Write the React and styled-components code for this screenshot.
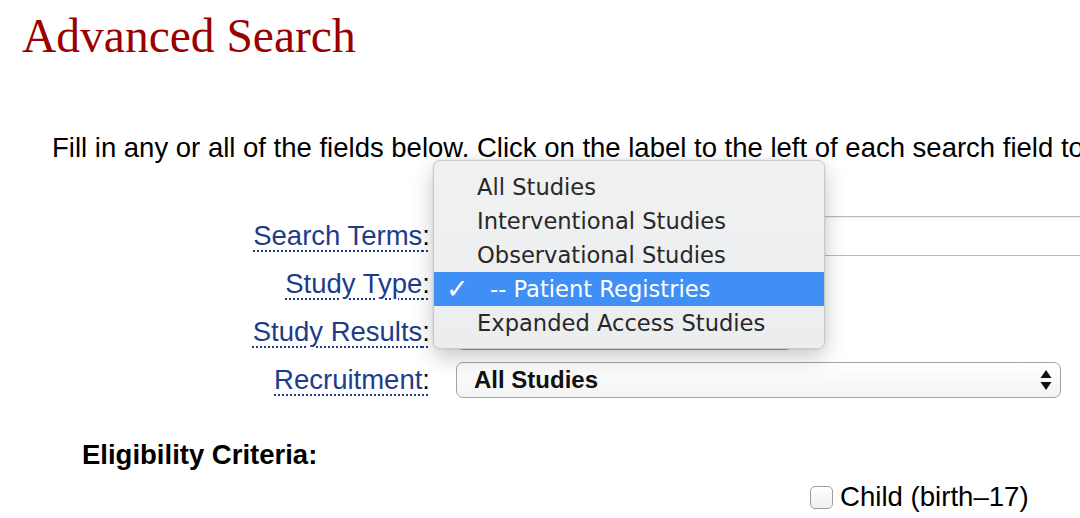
import React from 'react';
import styled, { createGlobalStyle } from 'styled-components';

const GlobalStyle = createGlobalStyle`
  html, body {
    margin: 0;
    padding: 0;
    background: #ffffff;
    overflow: hidden;
  }
  body {
    font-family: "Liberation Sans", Arial, sans-serif;
    color: #000;
  }
`;

const Page = styled.div`
  position: relative;
  width: 1080px;
  height: 518px;
  overflow: hidden;
`;

const Title = styled.h1`
  margin: 0;
  padding: 8px 0 0 22px;
  font-family: "Liberation Serif", Georgia, serif;
  font-weight: normal;
  font-size: 47.5px;
  line-height: 56px;
  color: #990000;
`;

const Intro = styled.p`
  margin: 68px 0 0 52px;
  font-size: 27.5px;
  line-height: 32px;
  white-space: nowrap;
`;

const Form = styled.div`
  position: relative;
  display: grid;
  grid-template-columns: 430px 1fr;
  grid-auto-rows: 40px;
  column-gap: 26px;
  row-gap: 8px;
  margin-top: 52px;
  align-items: center;
`;

const Label = styled.label`
  justify-self: end;
  font-size: 27.5px;
  line-height: 32px;
  color: #1d3c8c;
  text-decoration: underline dotted #1d3c8c;
  text-decoration-thickness: 2px;
  text-underline-offset: 5px;
  cursor: help;
  span {
    text-decoration: none;
    color: #000;
  }
`;

const TextInput = styled.div`
  height: 38px;
  width: 700px;
  border: 1px solid #b9b9b9;
  border-right: none;
  box-shadow: inset 0 1px 2px rgba(0, 0, 0, 0.08);
`;

const Select = styled.div`
  box-sizing: border-box;
  height: 36px;
  width: ${(p) => p.$width}px;
  border: 1.5px solid #a3a3a3;
  border-radius: 7px;
  background: linear-gradient(#ffffff, #f3f3f3);
  display: flex;
  align-items: center;
  justify-content: space-between;
  padding: 0 8px 0 17px;
  font-family: "Liberation Sans", Arial, sans-serif;
  font-weight: bold;
  font-size: 24px;
  color: #111;
`;

const Arrows = styled.svg`
  width: 12px;
  height: 24px;
`;

const Menu = styled.ul`
  position: absolute;
  left: 433px;
  top: -56px;
  width: 392px;
  margin: 0;
  padding: 9px 0 8px;
  list-style: none;
  box-sizing: border-box;
  background: linear-gradient(#f1f1f1, #ebedef);
  border: 1px solid #c9c9c9;
  border-radius: 7px;
  box-shadow: 0 8px 22px rgba(0, 0, 0, 0.22), 0 0 2px rgba(0, 0, 0, 0.15);
  font-family: "DejaVu Sans", "Lucida Grande", sans-serif;
  font-size: 22.6px;
  color: #282828;
  z-index: 2;
`;

const MenuItem = styled.li`
  position: relative;
  height: 34px;
  line-height: 34px;
  padding-left: ${(p) => (p.$indent ? 56 : 43)}px;
  white-space: nowrap;
  background: ${(p) => (p.$active ? '#3f8ff7' : 'transparent')};
  color: ${(p) => (p.$active ? '#ffffff' : 'inherit')};
`;

const Check = styled.span`
  position: absolute;
  left: 12px;
  top: 0;
  font-size: 27px;
  font-weight: bold;
`;

const SectionTitle = styled.h3`
  margin: 39px 0 0 82px;
  font-size: 27.5px;
  line-height: 32px;
  font-weight: bold;
`;

const CheckRow = styled.div`
  display: flex;
  align-items: center;
  gap: 7px;
  margin: 10px 0 0 810px;
  font-size: 27.6px;
  line-height: 32px;
  white-space: nowrap;
`;

const Box = styled.span`
  box-sizing: border-box;
  width: 23px;
  height: 23px;
  border: 1px solid #9f9f9f;
  border-radius: 5px;
  background: linear-gradient(#ffffff, #f0f0f0);
`;

const UpDown = () => (
  <Arrows viewBox="0 0 12 24">
    <path d="M6 2 L11.5 10 H0.5 Z" fill="#111" />
    <path d="M6 22 L11.5 14 H0.5 Z" fill="#111" />
  </Arrows>
);

const options = [
  { text: 'All Studies' },
  { text: 'Interventional Studies' },
  { text: 'Observational Studies' },
  { text: '-- Patient Registries', active: true },
  { text: 'Expanded Access Studies' },
];

export default function App() {
  return (
    <Page>
      <GlobalStyle />
      <Title>Advanced Search</Title>
      <Intro>
        Fill in any or all of the fields below. Click on the label to the left of each search field to learn more.
      </Intro>
      <Form>
        <Label>Search Terms<span>:</span></Label>
        <TextInput />
        <Label>Study Type<span>:</span></Label>
        <Select $width={337}>
          Patient Registries
          <UpDown />
        </Select>
        <Label>Study Results<span>:</span></Label>
        <Select $width={337}>
          All Studies
          <UpDown />
        </Select>
        <Label>Recruitment<span>:</span></Label>
        <Select $width={605}>
          All Studies
          <UpDown />
        </Select>
        <Menu>
          {options.map((o) => (
            <MenuItem key={o.text} $active={o.active} $indent={o.active}>
              {o.active && <Check>✓</Check>}
              {o.text}
            </MenuItem>
          ))}
        </Menu>
      </Form>
      <SectionTitle>Eligibility Criteria:</SectionTitle>
      <CheckRow>
        <Box />
        Child (birth–17)
      </CheckRow>
    </Page>
  );
}
